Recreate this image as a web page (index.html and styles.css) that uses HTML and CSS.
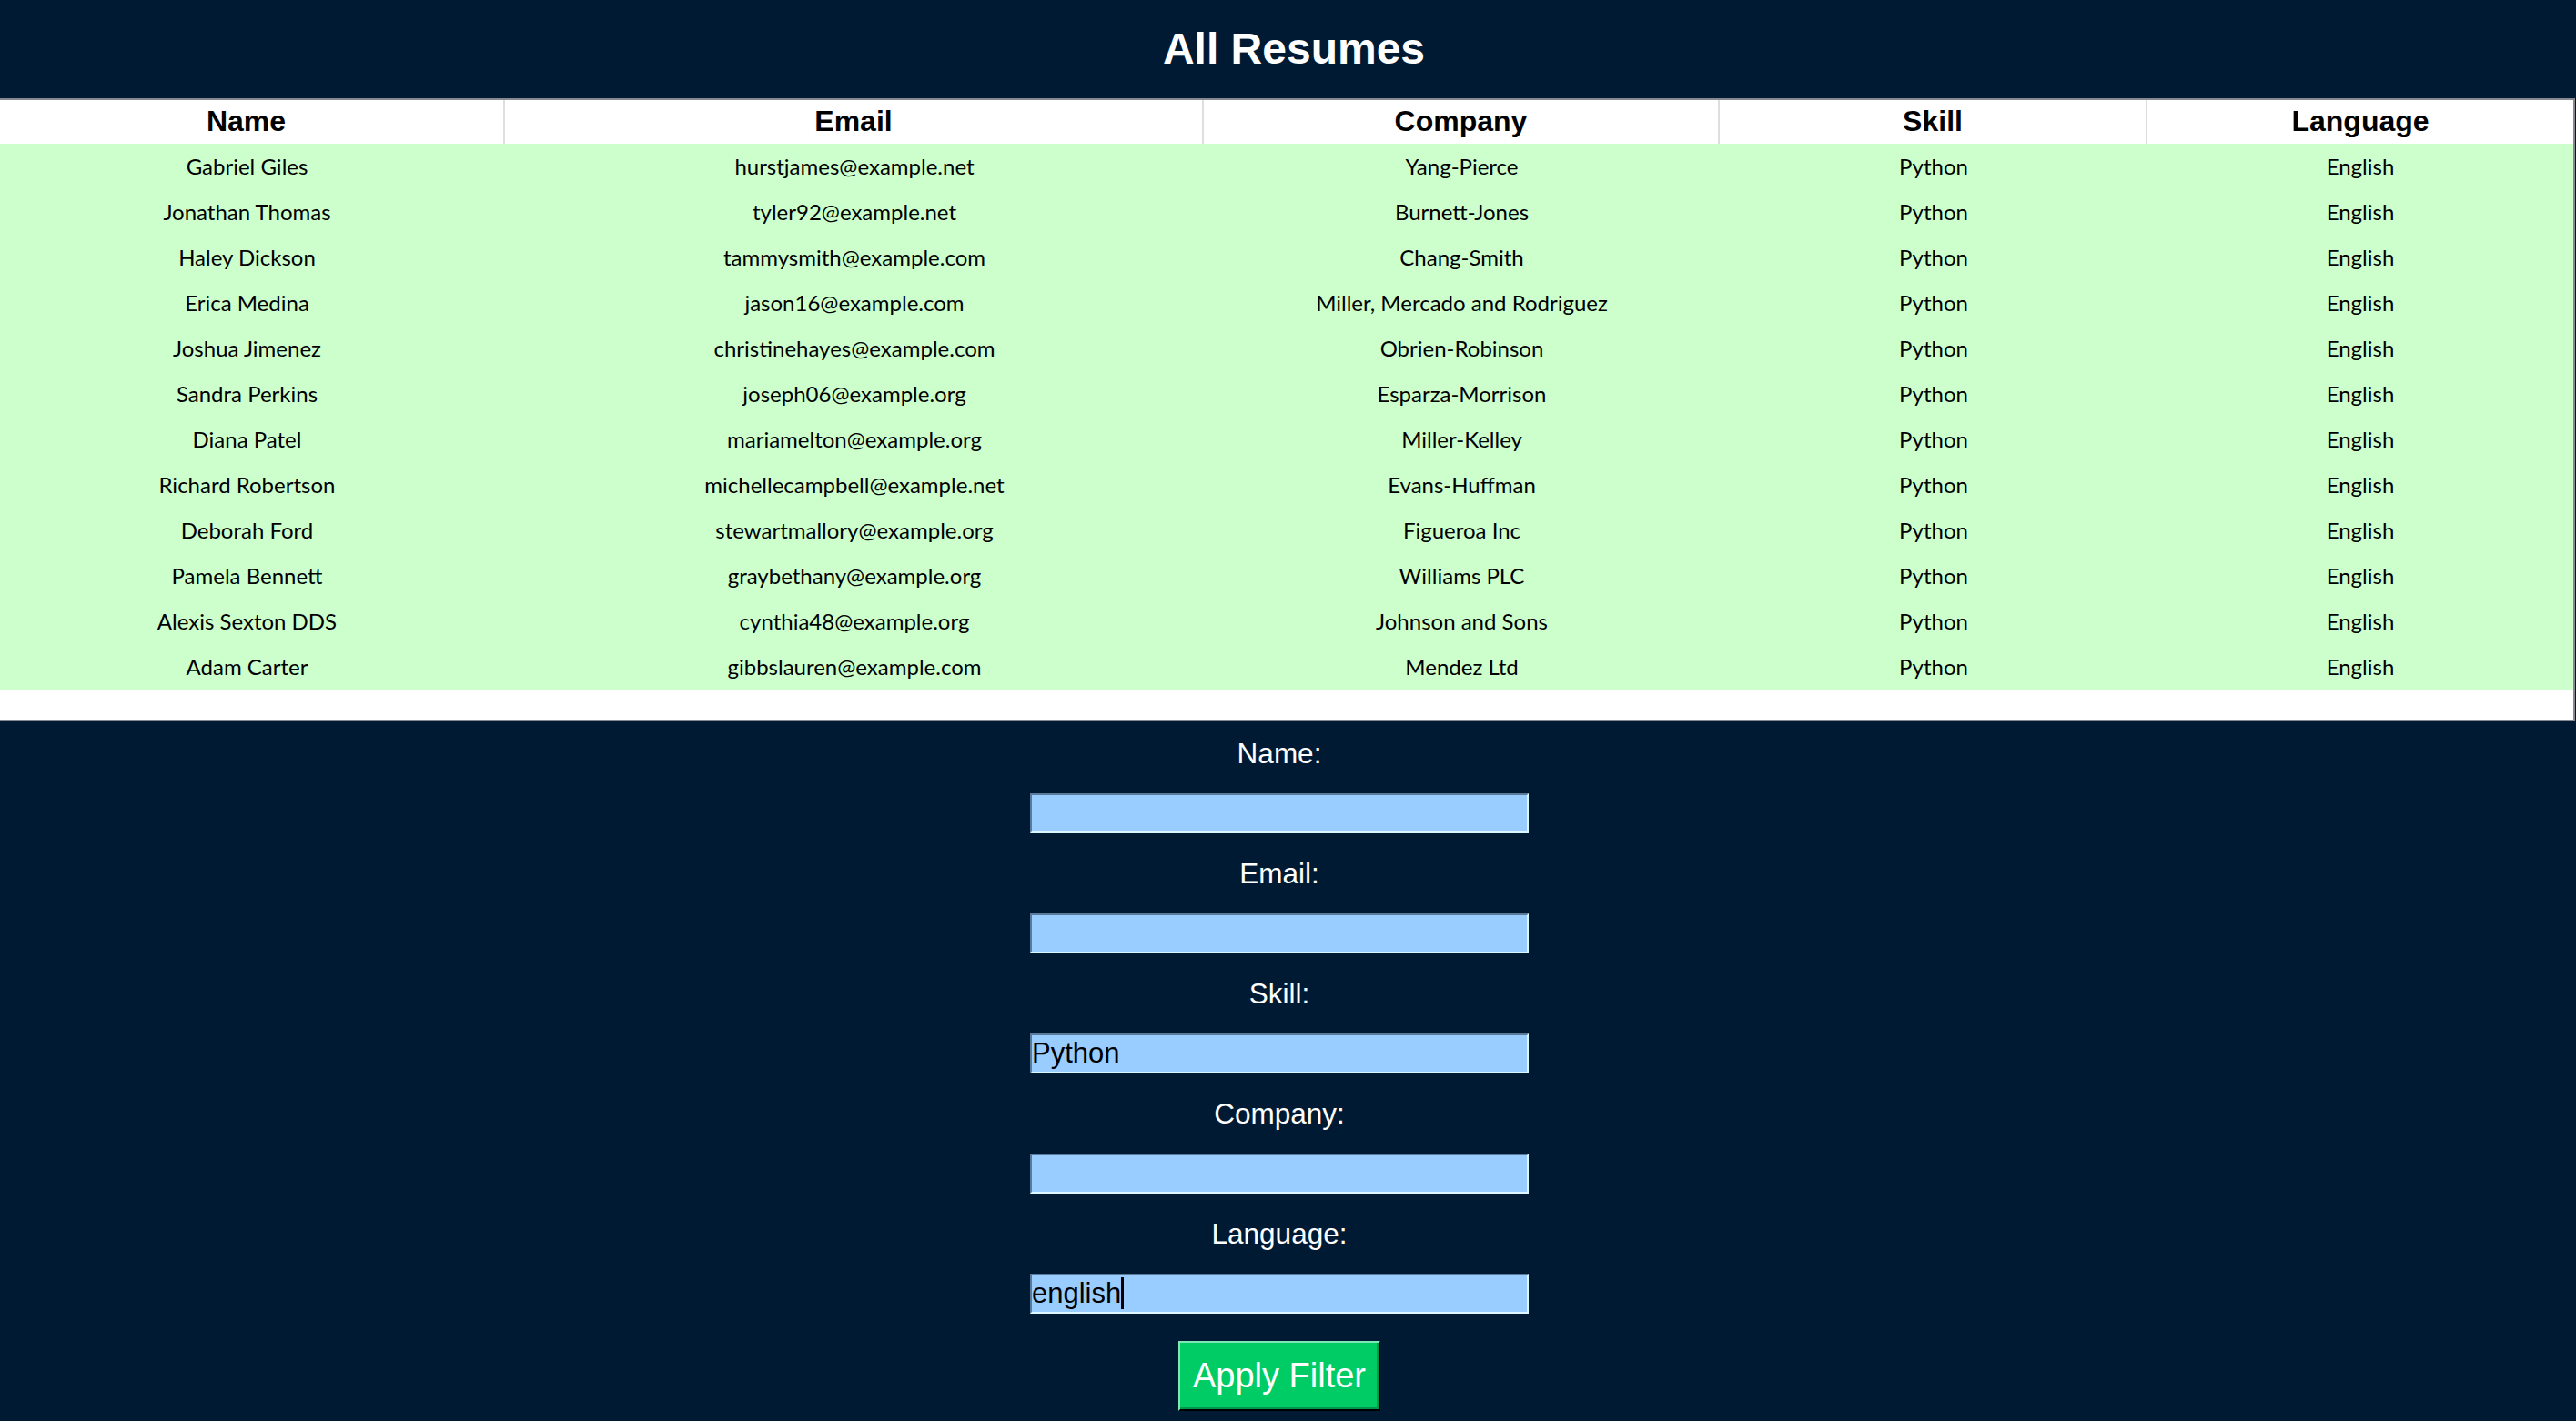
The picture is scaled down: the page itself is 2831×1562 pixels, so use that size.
FILE: index.html
```html
<!DOCTYPE html>
<html lang="en">
<head>
<meta charset="utf-8">
<title>All Resumes</title>
<link rel="stylesheet" href="styles.css">
</head>
<body>
<header class="page-header">
  <h1 class="title">All Resumes</h1>
</header>

<section class="resume-table">
  <div class="table-row table-head">
    <div class="cell">Name</div>
    <div class="cell">Email</div>
    <div class="cell">Company</div>
    <div class="cell">Skill</div>
    <div class="cell">Language</div>
  </div>
  <div class="table-row"><div class="cell">Gabriel Giles</div><div class="cell">hurstjames@example.net</div><div class="cell">Yang-Pierce</div><div class="cell">Python</div><div class="cell">English</div></div>
  <div class="table-row"><div class="cell">Jonathan Thomas</div><div class="cell">tyler92@example.net</div><div class="cell">Burnett-Jones</div><div class="cell">Python</div><div class="cell">English</div></div>
  <div class="table-row"><div class="cell">Haley Dickson</div><div class="cell">tammysmith@example.com</div><div class="cell">Chang-Smith</div><div class="cell">Python</div><div class="cell">English</div></div>
  <div class="table-row"><div class="cell">Erica Medina</div><div class="cell">jason16@example.com</div><div class="cell">Miller, Mercado and Rodriguez</div><div class="cell">Python</div><div class="cell">English</div></div>
  <div class="table-row"><div class="cell">Joshua Jimenez</div><div class="cell">christinehayes@example.com</div><div class="cell">Obrien-Robinson</div><div class="cell">Python</div><div class="cell">English</div></div>
  <div class="table-row"><div class="cell">Sandra Perkins</div><div class="cell">joseph06@example.org</div><div class="cell">Esparza-Morrison</div><div class="cell">Python</div><div class="cell">English</div></div>
  <div class="table-row"><div class="cell">Diana Patel</div><div class="cell">mariamelton@example.org</div><div class="cell">Miller-Kelley</div><div class="cell">Python</div><div class="cell">English</div></div>
  <div class="table-row"><div class="cell">Richard Robertson</div><div class="cell">michellecampbell@example.net</div><div class="cell">Evans-Huffman</div><div class="cell">Python</div><div class="cell">English</div></div>
  <div class="table-row"><div class="cell">Deborah Ford</div><div class="cell">stewartmallory@example.org</div><div class="cell">Figueroa Inc</div><div class="cell">Python</div><div class="cell">English</div></div>
  <div class="table-row"><div class="cell">Pamela Bennett</div><div class="cell">graybethany@example.org</div><div class="cell">Williams PLC</div><div class="cell">Python</div><div class="cell">English</div></div>
  <div class="table-row"><div class="cell">Alexis Sexton DDS</div><div class="cell">cynthia48@example.org</div><div class="cell">Johnson and Sons</div><div class="cell">Python</div><div class="cell">English</div></div>
  <div class="table-row"><div class="cell">Adam Carter</div><div class="cell">gibbslauren@example.com</div><div class="cell">Mendez Ltd</div><div class="cell">Python</div><div class="cell">English</div></div>
</section>

<form class="filter-form">
  <label class="field-label" for="f-name">Name:</label>
  <input class="field-input" id="f-name" type="text">
  <label class="field-label" for="f-email">Email:</label>
  <input class="field-input" id="f-email" type="text">
  <label class="field-label" for="f-skill">Skill:</label>
  <input class="field-input" id="f-skill" type="text" value="Python">
  <label class="field-label" for="f-company">Company:</label>
  <input class="field-input" id="f-company" type="text">
  <label class="field-label" for="f-language">Language:</label>
  <div class="field-wrap">
    <input class="field-input field-input--inner" id="f-language" type="text" value="english">
    <span class="caret"></span>
  </div>
  <button class="apply-btn" type="button">Apply Filter</button>
</form>
</body>
</html>
```

FILE: styles.css
```css
html, body {
  margin: 0;
  padding: 0;
  background: #001a33;
}

body {
  font-family: "Liberation Sans", Arial, sans-serif;
  min-height: 100vh;
  overflow: hidden;
}

.page-header {
  height: 108px;
  display: flex;
  justify-content: center;
}

.title {
  margin: 0;
  padding-left: 13px;
  font-size: 48px;
  line-height: 108px;
  font-weight: bold;
  color: #ffffff;
}

.resume-table {
  margin-left: -12px;
  width: 2842px;
  height: 685px;
  box-sizing: border-box;
  background: #ffffff;
  border: 2px solid #868a90;
  border-left: 0;
}

.table-row {
  display: grid;
  grid-template-columns: 567px 768px 567px 470px 468px;
  background: #ccffcc;
  height: 50px;
}

.table-row .cell {
  font-family: "Lato", "Open Sans", sans-serif;
  font-size: 24px;
  line-height: 49px;
  text-align: center;
  color: #000000;
  white-space: nowrap;
}

.table-head {
  background: #ffffff;
  height: 48px;
}

.table-head .cell {
  box-sizing: border-box;
  height: 48px;
  padding-bottom: 2px;
  font-family: "Liberation Sans", Arial, sans-serif;
  font-weight: bold;
  font-size: 32px;
  line-height: 46px;
  border-right: 2px solid #dedede;
}

.table-head .cell:last-child {
  border-right: 0;
}

.filter-form {
  display: flex;
  flex-direction: column;
  align-items: center;
  padding-top: 17px;
  padding-right: 19px;
}

.field-label {
  display: block;
  font-size: 31.5px;
  line-height: 37px;
  color: #ffffff;
  margin-bottom: 25px;
}

.field-input {
  display: block;
  box-sizing: border-box;
  width: 548px;
  height: 44px;
  margin: 0 0 26px;
  padding: 0;
  border: 2px solid;
  border-color: #5b7a99 #dcf5ff #dcf5ff #5b7a99;
  background: #99ccff;
  color: #000000;
  font-family: "Liberation Sans", Arial, sans-serif;
  font-size: 31px;
  outline: none;
}

.field-wrap {
  position: relative;
  margin-bottom: 26px;
}

.field-input--inner {
  margin: 0;
}

.caret {
  position: absolute;
  left: 100px;
  top: 4px;
  width: 3px;
  height: 35px;
  background: #000000;
}

.apply-btn {
  margin-top: 4px;
  box-sizing: border-box;
  height: 77px;
  padding: 0 14px;
  border: 2px solid;
  border-color: #80e6b3 #000000 #000000 #80e6b3;
  box-shadow: inset -2px -2px 0 #00994c;
  background: #00cc66;
  color: #ffffff;
  font-family: "Liberation Sans", Arial, sans-serif;
  font-size: 38px;
  line-height: 73px;
}
```
